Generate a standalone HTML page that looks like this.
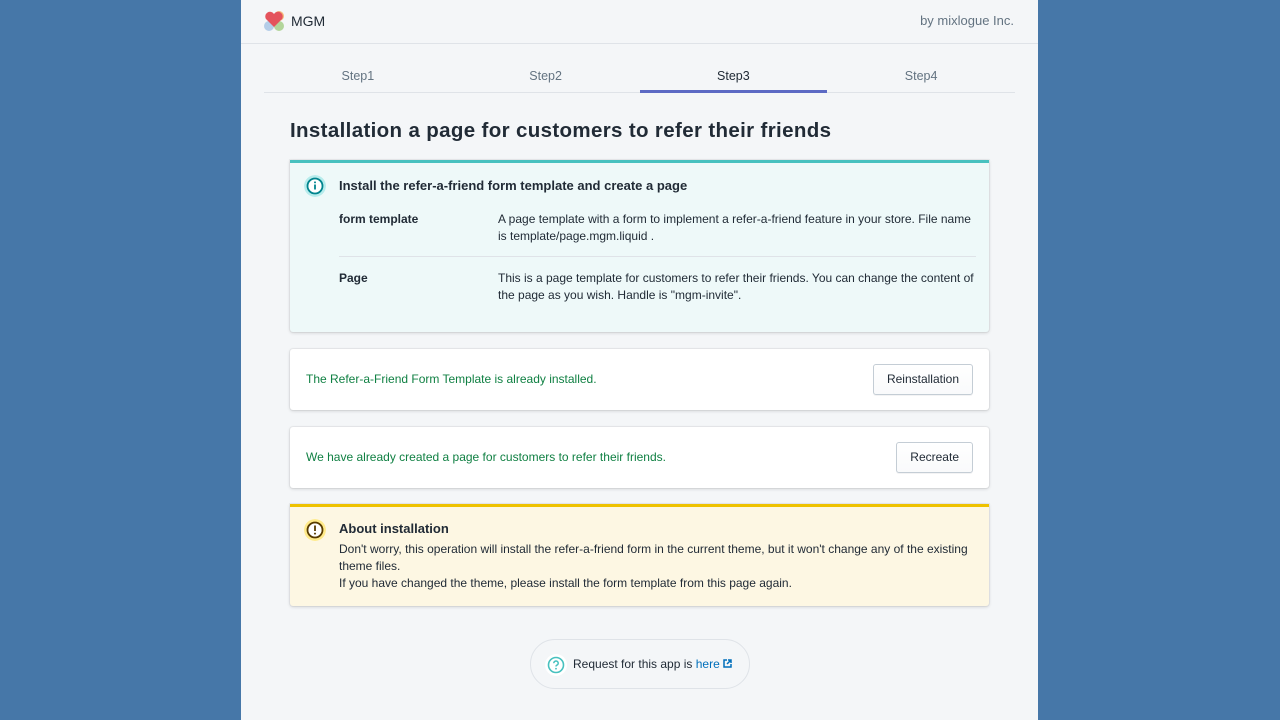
<!DOCTYPE html>
<html><head><meta charset="utf-8"><style>
*{box-sizing:border-box;margin:0;padding:0}
body{width:1280px;height:720px;background:#4677a8;font-family:"Liberation Sans",sans-serif;color:#212b36;overflow:hidden;position:relative}
.page{position:absolute;left:241px;top:0;width:797px;height:720px;background:#f4f6f8}
.hdr{height:44px;border-bottom:1px solid #dfe3e8;position:relative}
.logo{position:absolute;left:23px;top:11px}
.mgm{position:absolute;left:50px;top:13px;font-size:14px}
.by{position:absolute;right:24px;top:13px;font-size:13px;color:#637381}
.tabs{position:absolute;left:23px;top:59px;width:751px;height:34px;border-bottom:1px solid #dfe3e8;display:flex}
.tab{flex:1;text-align:center;font-size:12.5px;color:#637381;padding-top:10px}
.tab.a{color:#212b36;border-bottom:3px solid #5c6ac4;height:34px}
h1{position:absolute;left:49px;top:119px;font-size:20.5px;font-weight:bold;letter-spacing:0.35px;color:#212b36}
.card{position:absolute;left:49px;width:699px;background:#fff;border-radius:3px;box-shadow:0 0 0 1px rgba(63,63,68,.05),0 1px 3px rgba(63,63,68,.2)}
.info{top:160px;height:172px;background:#eef9f9;border-top:3px solid #47c1bf;border-radius:0 0 3px 3px}
.warn{top:504px;height:102px;background:#fdf7e3;border-top:3px solid #eec200;border-radius:0 0 3px 3px}
.ic{position:absolute;left:14px;width:22px;height:22px;border-radius:50%}
.t{position:absolute;left:49px;font-size:13px;font-weight:bold}
.s{font-size:12px;position:absolute;line-height:17px}
.g{color:#108043;font-size:12px;position:absolute;left:16px}
.btn{position:absolute;right:16px;top:15px;height:31px;border:1px solid #c4cdd5;border-radius:3px;background:linear-gradient(#fff,#f9fafb);font-size:12px;padding:0 13px;line-height:29px;box-shadow:0 1px 0 rgba(22,29,37,.05)}
.req{position:absolute;left:289px;top:639px;width:220px;height:50px;border:1px solid #dfe3e8;border-radius:25px;font-size:12px}
</style></head><body>
<div class="page">
<div class="hdr">
<svg class="logo" width="22" height="20" viewBox="0 0 22 20"><circle cx="15" cy="5" r="5" fill="#f4b97a"/><circle cx="5" cy="15" r="5" fill="#b4cde8"/><circle cx="15" cy="15" r="5" fill="#b2d59a"/><path d="M10 16 L2 8 A4 4 0 0 1 10 3 A4 4 0 0 1 18 8 Z" fill="#e4535c"/></svg>
<div class="mgm">MGM</div><div class="by">by mixlogue Inc.</div></div>
<div class="tabs"><div class="tab">Step1</div><div class="tab">Step2</div><div class="tab a">Step3</div><div class="tab">Step4</div></div>
<h1>Installation a page for customers to refer their friends</h1>
<div class="card info">
<svg class="ic" style="top:12px" viewBox="0 0 22 22"><circle cx="11" cy="11" r="11" fill="#b7ecec"/><circle cx="11" cy="11" r="7.5" fill="#fff" stroke="#00848e" stroke-width="1.8"/><rect x="10.1" y="9.5" width="1.8" height="5" fill="#00848e"/><circle cx="11" cy="7.4" r="1" fill="#00848e"/></svg>
<div class="t" style="top:15px">Install the refer-a-friend form template and create a page</div>
<div class="s" style="left:49px;top:48px;font-weight:bold">form template</div>
<div class="s" style="left:208px;top:48px;width:480px">A page template with a form to implement a refer-a-friend feature in your store. File name is template/page.mgm.liquid .</div>
<div style="position:absolute;left:49px;top:93px;width:637px;border-top:1px solid #dfe3e8"></div>
<div class="s" style="left:49px;top:107px;font-weight:bold">Page</div>
<div class="s" style="left:208px;top:107px;width:480px">This is a page template for customers to refer their friends. You can change the content of the page as you wish. Handle is "mgm-invite".</div>
</div>
<div class="card" style="top:349px;height:61px"><div class="g" style="top:23px">The Refer-a-Friend Form Template is already installed.</div><div class="btn">Reinstallation</div></div>
<div class="card" style="top:427px;height:61px"><div class="g" style="top:23px">We have already created a page for customers to refer their friends.</div><div class="btn">Recreate</div></div>
<div class="card warn">
<svg class="ic" style="top:12px" viewBox="0 0 22 22"><circle cx="11" cy="11" r="11" fill="#ffea8a"/><circle cx="11" cy="11" r="7.5" fill="#fff" stroke="#573b00" stroke-width="1.8"/><rect x="10.1" y="6.5" width="1.8" height="5.5" fill="#573b00"/><circle cx="11" cy="14.6" r="1" fill="#573b00"/></svg>
<div class="t" style="top:14px">About installation</div>
<div class="s" style="left:49px;top:34px;width:640px">Don't worry, this operation will install the refer-a-friend form in the current theme, but it won't change any of the existing theme files.<br>If you have changed the theme, please install the form template from this page again.</div>
</div>
<div class="req">
<svg style="position:absolute;left:14px;top:14px" width="22" height="22" viewBox="0 0 22 22"><circle cx="11" cy="11" r="11" fill="#fff"/><circle cx="11" cy="11" r="7.5" fill="none" stroke="#47c1bf" stroke-width="1.6"/><path d="M8.8 9.2a2.2 2.2 0 1 1 3 2c-.6.3-.8.6-.8 1.3" fill="none" stroke="#47c1bf" stroke-width="1.5"/><circle cx="11" cy="14.7" r=".9" fill="#47c1bf"/></svg>
<div style="position:absolute;left:42px;top:17px">Request for this app is <span style="color:#006fbb">here</span> <svg width="9" height="9" viewBox="0 0 9 9"><path d="M4 1H1v7h7V5" fill="none" stroke="#006fbb" stroke-width="1.5"/><path d="M5 1h3v3M8 1L4 5" fill="none" stroke="#006fbb" stroke-width="1.5"/></svg></div>
</div>
</div>
</body></html>
